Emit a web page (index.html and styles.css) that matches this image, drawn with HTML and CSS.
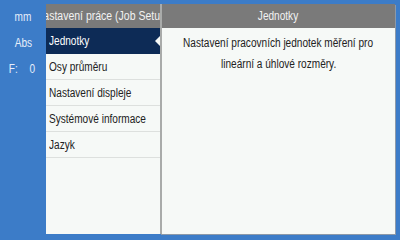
FILE: index.html
```html
<!DOCTYPE html>
<html>
<head>
<meta charset="utf-8">
<link rel="stylesheet" href="styles.css">
</head>
<body>
<div class="app">
  <div class="side">
    <div class="side-item"><span class="t">mm</span></div>
    <div class="side-item"><span class="t">Abs</span></div>
    <div class="side-item side-f"><span class="t">F:</span><span class="t">0</span></div>
  </div>
  <div class="menu">
    <div class="head"><span class="t wide">Nastavení práce (Job Setup)</span></div>
    <div class="row sel"><span class="t l">Jednotky</span></div>
    <div class="row"><span class="t l">Osy průměru</span></div>
    <div class="row"><span class="t l">Nastavení displeje</span></div>
    <div class="row"><span class="t l">Systémové informace</span></div>
    <div class="row"><span class="t l">Jazyk</span></div>
  </div>
  <div class="detail">
    <div class="head"><span class="t">Jednotky</span></div>
    <div class="desc">
      <span class="t">Nastavení pracovních jednotek měření pro</span>
      <span class="t">lineární a úhlové rozměry.</span>
    </div>
  </div>
</div>
</body>
</html>
```
FILE: styles.css
```css
html, body {
  margin: 0;
  padding: 0;
}
body {
  width: 400px;
  height: 240px;
  background: #3c7cc8;
  overflow: hidden;
  font-family: "Liberation Sans", Arial, sans-serif;
  font-size: 12px;
  color: #222;
}
.t {
  display: inline-block;
  white-space: nowrap;
  transform: scaleX(0.84);
  transform-origin: center center;
}
.t.l {
  transform-origin: left center;
}
.t.wide {
  font-size: 12.5px;
}
.app {
  display: flex;
  height: 240px;
}
.side {
  width: 46px;
  padding-top: 4px;
  color: #e6eefa;
}
.side-item {
  height: 26px;
  display: flex;
  align-items: center;
  justify-content: center;
}
.side-f {
  justify-content: space-between;
  padding: 0 10px 0 8px;
}
.menu {
  width: 114px;
  margin-top: 4px;
  height: 230px;
  background: #f6f9f7;
}
.head {
  height: 24px;
  background: #7a7a7a;
  color: #f2f2f2;
  display: flex;
  align-items: center;
  justify-content: center;
  overflow: hidden;
  white-space: nowrap;
}
.row {
  height: 25px;
  border-bottom: 1px solid #dde0de;
  display: flex;
  align-items: center;
  padding-left: 3px;
  white-space: nowrap;
  position: relative;
  overflow: hidden;
}
.row.sel {
  background: #0d2b56;
  color: #fff;
  border-bottom-color: #0d2b56;
}
.row.sel::after {
  content: "";
  position: absolute;
  right: 0;
  top: 8px;
  border-style: solid;
  border-width: 5px 5px 5px 0;
  border-color: transparent #f6f9f7 transparent transparent;
}
.detail {
  width: 233px;
  margin-top: 4px;
  height: 230px;
  background: #f6f9f7;
  border-left: 2px solid #a9abaa;
  box-shadow: 1px 1px 0 #8c99a8;
}
.desc {
  display: flex;
  flex-direction: column;
  align-items: center;
  line-height: 21px;
  padding-top: 5px;
}
```
